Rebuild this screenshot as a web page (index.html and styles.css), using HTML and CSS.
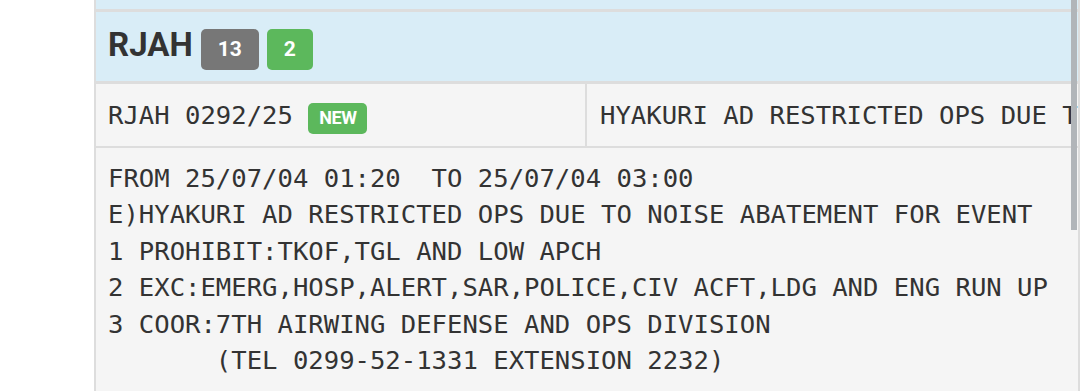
FILE: index.html
```html
<!DOCTYPE html>
<html lang="en">
<head>
  <meta charset="UTF-8">
  <title>NOTAM: RJAH</title>
  <link rel="stylesheet" href="styles.css">
</head>
<body>
  <div class="page">
    <div class="panel">
      <div class="prev"></div>
      <div class="head">
        <span class="icao">RJAH</span>
        <span class="label label-default">13</span>
        <span class="label label-success">2</span>
      </div>
      <div class="row">
        <div class="cell id">RJAH 0292/25 <span class="label label-new">NEW</span></div>
        <div class="cell summary">HYAKURI AD RESTRICTED OPS DUE TO NOISE ABATEMENT FOR EVENT</div>
      </div>
<pre class="text">FROM 25/07/04 01:20  TO 25/07/04 03:00
E)HYAKURI AD RESTRICTED OPS DUE TO NOISE ABATEMENT FOR EVENT
1 PROHIBIT:TKOF,TGL AND LOW APCH
2 EXC:EMERG,HOSP,ALERT,SAR,POLICE,CIV ACFT,LDG AND ENG RUN UP
3 COOR:7TH AIRWING DEFENSE AND OPS DIVISION
       (TEL 0299-52-1331 EXTENSION 2232)</pre>
    </div>
  </div>
  <div class="scroll-thumb"></div>
</body>
</html>
```

FILE: styles.css
```css
* {
  box-sizing: border-box;
}
body {
  margin: 0;
  background: white;
  color: #333;
  font-family: Roboto, "Liberation Sans", sans-serif;
  overflow: hidden;
}
.page {
  padding-left: 94px;
  height: 391px;
}
.panel {
  height: 100%;
  border-left: 2px solid #ddd;
  border-right: 2px solid #ddd;
  background: #f5f5f5;
}
.prev {
  height: 12px;
  background: #d9edf7;
  border-bottom: 3px solid #ddd;
}
.head {
  height: 72px;
  background: #d9edf7;
  border-bottom: 3px solid #ddd;
  padding: 13px 12px 0;
  display: flex;
  align-items: baseline;
  gap: 8px;
}
.icao {
  font-size: 33px;
  line-height: 40px;
  font-weight: bold;
}
.label {
  display: inline-block;
  color: white;
  font-weight: bold;
  border-radius: 5px;
  font-family: Roboto, "Liberation Sans", sans-serif;
}
.label-default,
.label-success {
  font-size: 21px;
  line-height: 20px;
  padding: 10px 17px 11px;
}
.label-default {
  background: #777;
}
.label-success {
  background: #5cb85c;
}
.label-new {
  background: #5cb85c;
  font-size: 18px;
  line-height: 18px;
  padding: 6px 11px 7px;
  letter-spacing: -0.5px;
}
.row {
  height: 64px;
  border-bottom: 2px solid #ddd;
  display: flex;
}
.cell {
  display: flex;
  align-items: center;
  font-family: "DejaVu Sans Mono", monospace;
  font-size: 25.6px;
  line-height: 36.4px;
  white-space: pre;
  overflow: hidden;
}
.id {
  width: 491px;
  padding-left: 12px;
  border-right: 2px solid #ddd;
  align-items: baseline;
  padding-top: 13px;
}
.summary {
  flex: 1;
  padding-left: 13px;
}
.text {
  margin: 0;
  padding: 12px 12px;
  font-family: "DejaVu Sans Mono", monospace;
  font-size: 25.6px;
  line-height: 36.4px;
  color: #333;
}
.scroll-thumb {
  position: fixed;
  top: 0;
  right: 3px;
  width: 6px;
  height: 230px;
  background: #b1b5b9;
}
```
